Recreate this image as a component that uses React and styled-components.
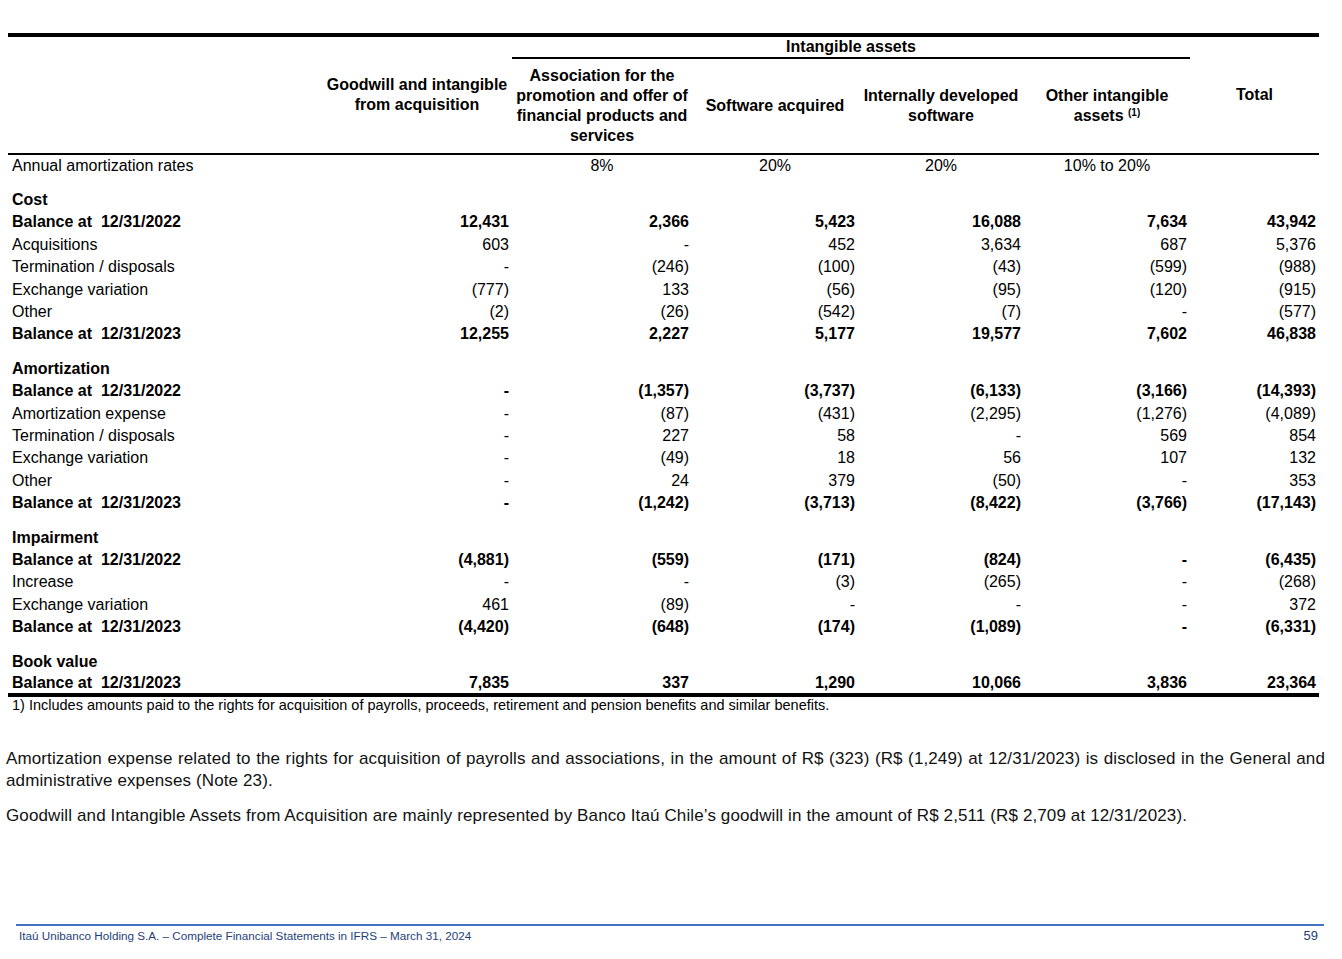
import React from "react"
import styled, { createGlobalStyle } from "styled-components"

const GlobalStyle = createGlobalStyle`
  body {
    margin: 0;
    background: #fff;
    font-family: "Liberation Sans", Arial, sans-serif;
    color: #000;
  }
`

const Page = styled.div`
  width: 1342px;
  height: 959px;
  display: flex;
  flex-direction: column;
  box-sizing: border-box;
  padding-top: 33px;
`

const TableWrap = styled.div`
  margin-left: 8px;
  width: 1311px;
`

const Table = styled.table`
  width: 1311px;
  table-layout: fixed;
  border-collapse: collapse;
  font-size: 16px;
  border-top: 4px solid #000;
  border-bottom: 4px solid #000;
`

const HeadTop = styled.th`
  padding: 0;
  height: 20px;
  font-weight: bold;
  text-align: center;
  vertical-align: middle;
  line-height: 18px;
  border-bottom: 2px solid #000;
`

const HeadCell = styled.th`
  padding: 0 2px;
  height: ${p => (p.$tall ? "116px" : "94px")};
  font-weight: bold;
  text-align: center;
  vertical-align: middle;
  line-height: 20px;
  border-bottom: 2px solid #000;
`

const Sup = styled.sup`
  font-size: 10px;
  vertical-align: top;
  position: relative;
  top: -3px;
`

const Row = styled.tr`
  height: 22.4px;
  font-weight: ${p => (p.$bold ? "bold" : "normal")};
`

const Spacer = styled.tr`
  height: 12px;
`

const Label = styled.td`
  padding: 1px 0 0 4px;
  white-space: pre;
  line-height: 18px;
`

const Num = styled.td`
  padding: 1px 3px 0 0;
  text-align: right;
  line-height: 18px;
`

const Rate = styled.td`
  padding: 1px 0 0 0;
  text-align: center;
  line-height: 18px;
`

const Footnote = styled.div`
  margin-left: 12px;
  margin-top: 0;
  font-size: 14.5px;
  line-height: 17px;
`

const Notes = styled.div`
  margin: 34px 0 0 6px;
  width: 1319px;
  font-size: 17px;
  letter-spacing: 0.12px;
  line-height: 22px;
  color: #111;
`

const Para = styled.p`
  margin: 0 0 13px 0;
  text-align: justify;
`

const Footer = styled.div`
  margin: auto 0 0 16px;
  width: 1308px;
  border-top: 2px solid #4472c4;
  display: flex;
  justify-content: space-between;
  padding: 3px 6px 16px 3px;
  box-sizing: border-box;
  font-size: 11.7px;
  line-height: 14px;
  color: #1f3f7a;
`

const PageNum = styled.span`
  font-size: 13px;
`

const cols = [314, 190, 180, 166, 166, 166, 129]

const sections = [
  {
    title: "Cost",
    rows: [
      ["Balance at  12/31/2022", ["12,431", "2,366", "5,423", "16,088", "7,634", "43,942"], true],
      ["Acquisitions", ["603", "-", "452", "3,634", "687", "5,376"]],
      ["Termination / disposals", ["-", "(246)", "(100)", "(43)", "(599)", "(988)"]],
      ["Exchange variation", ["(777)", "133", "(56)", "(95)", "(120)", "(915)"]],
      ["Other", ["(2)", "(26)", "(542)", "(7)", "-", "(577)"]],
      ["Balance at  12/31/2023", ["12,255", "2,227", "5,177", "19,577", "7,602", "46,838"], true],
    ],
  },
  {
    title: "Amortization",
    rows: [
      ["Balance at  12/31/2022", ["-", "(1,357)", "(3,737)", "(6,133)", "(3,166)", "(14,393)"], true],
      ["Amortization expense", ["-", "(87)", "(431)", "(2,295)", "(1,276)", "(4,089)"]],
      ["Termination / disposals", ["-", "227", "58", "-", "569", "854"]],
      ["Exchange variation", ["-", "(49)", "18", "56", "107", "132"]],
      ["Other", ["-", "24", "379", "(50)", "-", "353"]],
      ["Balance at  12/31/2023", ["-", "(1,242)", "(3,713)", "(8,422)", "(3,766)", "(17,143)"], true],
    ],
  },
  {
    title: "Impairment",
    rows: [
      ["Balance at  12/31/2022", ["(4,881)", "(559)", "(171)", "(824)", "-", "(6,435)"], true],
      ["Increase", ["-", "-", "(3)", "(265)", "-", "(268)"]],
      ["Exchange variation", ["461", "(89)", "-", "-", "-", "372"]],
      ["Balance at  12/31/2023", ["(4,420)", "(648)", "(174)", "(1,089)", "-", "(6,331)"], true],
    ],
  },
  {
    title: "Book value",
    rows: [["Balance at  12/31/2023", ["7,835", "337", "1,290", "10,066", "3,836", "23,364"], true]],
  },
]

export default function App() {
  return (
    <Page>
      <GlobalStyle />
      <TableWrap>
        <Table>
          <colgroup>
            {cols.map((w, i) => (
              <col key={i} style={{ width: w }} />
            ))}
          </colgroup>
          <thead>
            <tr>
              <HeadCell rowSpan={2} $tall />
              <HeadCell rowSpan={2} $tall>
                Goodwill and intangible
                <br />
                from acquisition
              </HeadCell>
              <HeadTop colSpan={4}>Intangible assets</HeadTop>
              <HeadCell rowSpan={2} $tall>
                Total
              </HeadCell>
            </tr>
            <tr>
              <HeadCell>Association for the promotion and offer of financial products and services</HeadCell>
              <HeadCell>Software acquired</HeadCell>
              <HeadCell>
                Internally developed
                <br />
                software
              </HeadCell>
              <HeadCell>
                Other intangible
                <br />
                assets <Sup>(1)</Sup>
              </HeadCell>
            </tr>
          </thead>
          <tbody>
            <Row>
              <Label>Annual amortization rates</Label>
              <Rate />
              <Rate>8%</Rate>
              <Rate>20%</Rate>
              <Rate>20%</Rate>
              <Rate>10% to 20%</Rate>
              <Rate />
            </Row>
            {sections.map(s => (
              <React.Fragment key={s.title}>
                <Spacer>
                  <td colSpan={7} />
                </Spacer>
                <Row $bold>
                  <Label colSpan={7}>{s.title}</Label>
                </Row>
                {s.rows.map(([label, vals, bold], i) => (
                  <Row key={i} $bold={bold}>
                    <Label>{label}</Label>
                    {vals.map((v, j) => (
                      <Num key={j}>{v}</Num>
                    ))}
                  </Row>
                ))}
              </React.Fragment>
            ))}
          </tbody>
        </Table>
      </TableWrap>
      <Footnote>
        1) Includes amounts paid to the rights for acquisition of payrolls, proceeds, retirement and pension benefits and similar benefits.
      </Footnote>
      <Notes>
        <Para>
          Amortization expense related to the rights for acquisition of payrolls and associations, in the amount of R$ (323) (R$ (1,249) at 12/31/2023) is disclosed in the General and administrative expenses (Note 23).
        </Para>
        <Para>
          Goodwill and Intangible Assets from Acquisition are mainly represented by Banco Itaú Chile’s goodwill in the amount of R$ 2,511 (R$ 2,709 at 12/31/2023).
        </Para>
      </Notes>
      <Footer>
        <span>Itaú Unibanco Holding S.A. – Complete Financial Statements in IFRS – March 31, 2024</span>
        <PageNum>59</PageNum>
      </Footer>
    </Page>
  )
}
